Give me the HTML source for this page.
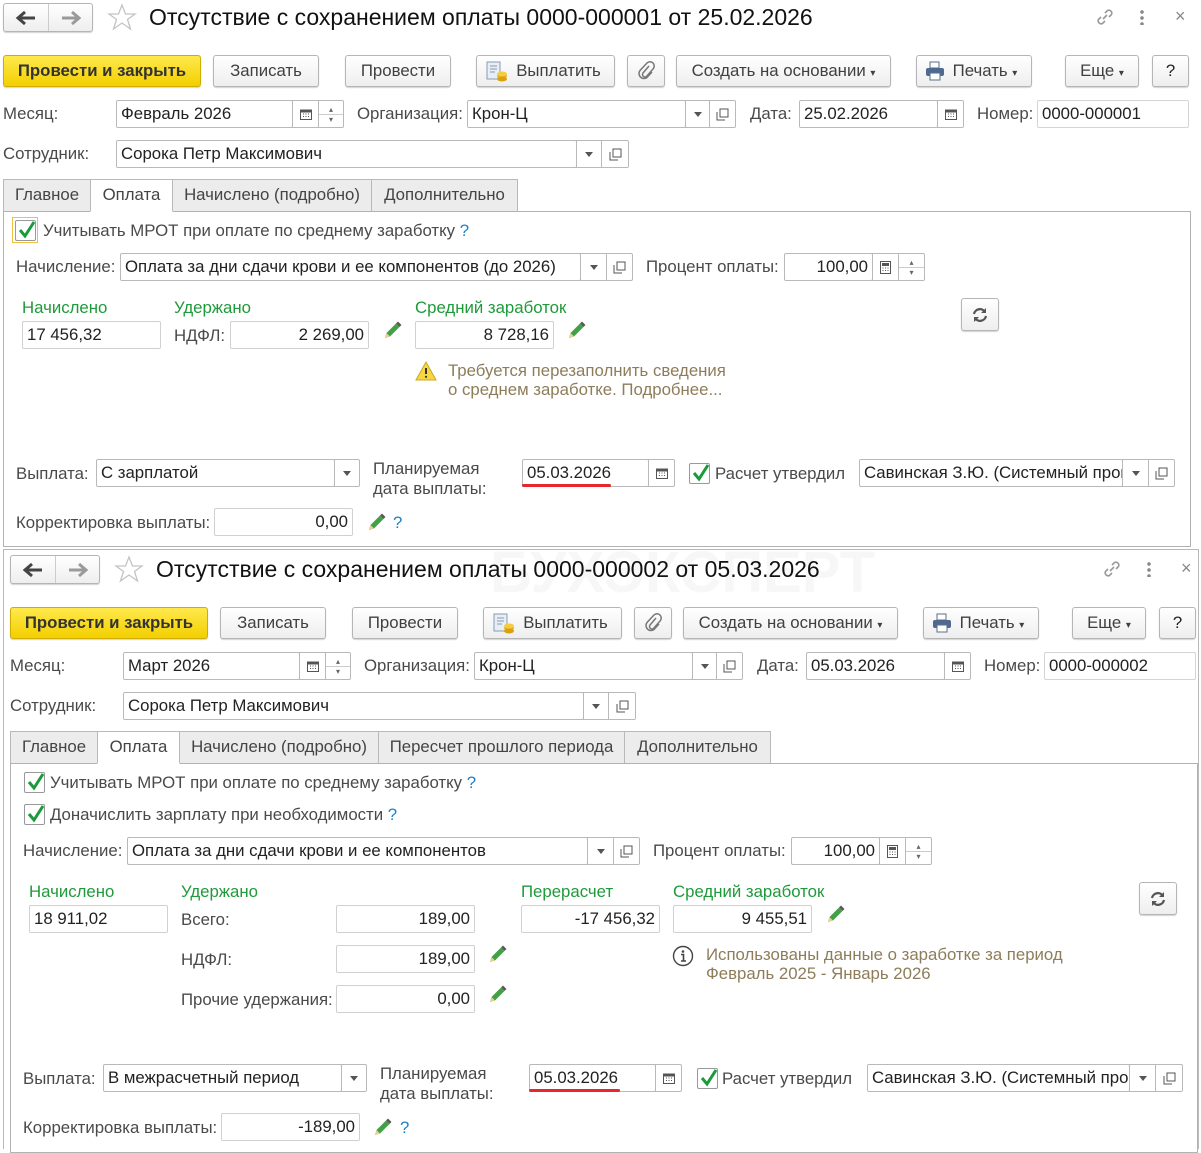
<!DOCTYPE html>
<html><head><meta charset="utf-8"><style>
*{box-sizing:border-box;margin:0;padding:0}
body{width:1201px;height:1147px;background:#fff;position:relative;overflow:hidden;font-family:"Liberation Sans",Arial,sans-serif;font-size:16.8px;color:#4a4a4a}
.a{position:absolute}
.l{position:absolute;white-space:nowrap;line-height:20px}
.g{color:#1f9a3a}
.q{color:#1a7fc8}
.in{position:absolute;height:28px;border:1px solid #b9b9b9;border-radius:2px;background:#fff;color:#222;line-height:26px;padding:0 4px;white-space:nowrap;overflow:hidden}
.r{text-align:right}
.sb{position:absolute;height:28px;border:1px solid #b9b9b9;border-radius:0 2px 2px 0;background:#fff;display:flex;align-items:center;justify-content:center}
.mid{border-radius:0}
.btn{position:absolute;height:32px;border:1px solid #b5b5b5;border-radius:3px;background:linear-gradient(#fff,#eeeeee);box-shadow:0 1px 1px rgba(0,0,0,.18);color:#404040;line-height:30px;text-align:center;white-space:nowrap}
.y{background:linear-gradient(#ffe94d,#f3cf00);border-color:#cfae00;font-weight:bold;color:#333}
.tab{position:absolute;height:33px;border:1px solid #b9b9b9;background:#ececec;color:#444;line-height:30px;text-align:center;white-space:nowrap}
.tab.act{background:#fff;border-bottom-color:#fff;z-index:2}
.panel{position:absolute;border:1px solid #b2b2b2;background:#fff}
.ttl{position:absolute;font-size:23px;color:#111;white-space:nowrap;line-height:28px}
.cb{position:absolute;width:21px;height:21px;border:1px solid #999;border-radius:2px;background:#fff}
.dd{width:0;height:0;border-left:4px solid transparent;border-right:4px solid transparent;border-top:5px solid #555}
.warn{color:#8d7d5a}
</style></head><body>

<div class="l" style="left:490px;top:543px;font-size:58px;line-height:60px;font-weight:bold;color:rgba(0,0,0,0.03)">БУХЭКСПЕРТ</div>

<!-- ================= FORM 1 ================= -->
<div class="btn" style="left:3px;top:3px;width:90px;height:29px"></div>
<div class="a" style="left:48px;top:4px;width:1px;height:27px;background:#ccc"></div>
<svg class="a" style="left:15px;top:9px" width="22" height="18"><path d="M20 9H5M10 3L3 9L10 15" stroke="#444" stroke-width="3" fill="none"/></svg>
<svg class="a" style="left:60px;top:9px" width="22" height="18"><path d="M2 9H17M12 3L19 9L12 15" stroke="#9a9a9a" stroke-width="3" fill="none"/></svg>
<svg class="a" style="left:107px;top:3px" width="30" height="28"><path d="M15 2L18.5 11H28L20.5 16.5L23.5 26L15 20L6.5 26L9.5 16.5L2 11H11.5Z" fill="none" stroke="#c4c4c4" stroke-width="1.3"/></svg>
<div class="ttl" style="left:149px;top:3px">Отсутствие с сохранением оплаты 0000-000001 от 25.02.2026</div>
<svg class="a" style="left:1094px;top:6px" width="22" height="22"><path d="M9 13L13 9M7 11L4.5 13.5a3 3 0 0 0 4 4L11 15M15 11L17.5 8.5a3 3 0 0 0-4-4L11 7" stroke="#999" stroke-width="1.6" fill="none"/></svg>
<div class="a" style="left:1140px;top:9px;width:4px;height:16px;background:radial-gradient(circle,#888 1.6px,transparent 2px) 0 0/4px 6px"></div>
<div class="l" style="left:1175px;top:6px;color:#888;font-size:18px">×</div>

<div class="btn y" style="left:3px;top:55px;width:198px">Провести и закрыть</div>
<div class="btn" style="left:213px;top:55px;width:106px">Записать</div>
<div class="btn" style="left:345px;top:55px;width:106px">Провести</div>
<div class="btn" style="left:476px;top:55px;width:139px;padding-left:26px">Выплатить</div>
<svg class="a" style="left:486px;top:61px" width="22" height="22"><rect x="1" y="1" width="13" height="17" fill="#e8eef5" stroke="#8a9bb0"/><path d="M4 5h7M4 8h7M4 11h5" stroke="#8a9bb0"/><ellipse cx="16" cy="15" rx="5" ry="2.5" fill="#e2b020"/><ellipse cx="16" cy="18" rx="5" ry="2.5" fill="#d9a010"/><ellipse cx="16" cy="13" rx="5" ry="2.5" fill="#f3cc40"/></svg>
<div class="btn" style="left:627px;top:55px;width:38px"></div>
<svg class="a" style="left:637px;top:61px" width="20" height="20"><path d="M12 5L6 12a2.5 2.5 0 0 0 3.5 3.5L16 8a4 4 0 0 0-6-6L3 9.5a5 5 0 0 0 7 7L15 11" stroke="#777" stroke-width="1.5" fill="none"/></svg>
<div class="btn" style="left:676px;top:55px;width:215px">Создать на основании <span style="font-size:10px">▾</span></div>
<div class="btn" style="left:916px;top:55px;width:116px;padding-left:22px">Печать <span style="font-size:10px">▾</span></div>
<svg class="a" style="left:925px;top:61px" width="20" height="20"><rect x="5" y="1" width="9" height="6" fill="#fff" stroke="#5a6f8c"/><rect x="1" y="7" width="18" height="8" rx="2" fill="#4e6a90"/><rect x="5" y="12" width="10" height="7" fill="#fff" stroke="#5a6f8c"/></svg>
<div class="btn" style="left:1065px;top:55px;width:74px">Еще <span style="font-size:10px">▾</span></div>
<div class="btn" style="left:1152px;top:55px;width:37px;color:#222">?</div>

<div class="l" style="left:3px;top:104px">Месяц:</div>
<div class="in" style="left:116px;top:100px;width:177px">Февраль 2026</div>
<div class="sb mid" style="left:292px;top:100px;width:27px"><svg width="12" height="12"><rect x="0.5" y="2" width="11" height="9.5" fill="none" stroke="#555"/><path d="M0.5 2h11v2.5h-11z" fill="#555"/><path d="M3 6h1M5.5 6h1M8 6h1M3 8.5h1M5.5 8.5h1M8 8.5h1" stroke="#555"/></svg></div>
<div class="sb" style="left:318px;top:100px;width:26px;flex-direction:column"><div style="font-size:8px;line-height:9px;color:#666">▴</div><div style="width:24px;height:1px;background:#ccc"></div><div style="font-size:8px;line-height:9px;color:#666">▾</div></div>
<div class="l" style="left:357px;top:104px">Организация:</div>
<div class="in" style="left:467px;top:100px;width:219px">Крон-Ц</div>
<div class="sb mid" style="left:685px;top:100px;width:25px"><div class="dd"></div></div>
<div class="sb" style="left:709px;top:100px;width:27px"><svg width="13" height="13"><rect x="4" y="1" width="8" height="8" fill="none" stroke="#555"/><path d="M1 4v8h8" fill="none" stroke="#555"/></svg></div>
<div class="l" style="left:750px;top:104px">Дата:</div>
<div class="in" style="left:799px;top:100px;width:139px">25.02.2026</div>
<div class="sb" style="left:937px;top:100px;width:27px"><svg width="12" height="12"><rect x="0.5" y="2" width="11" height="9.5" fill="none" stroke="#555"/><path d="M0.5 2h11v2.5h-11z" fill="#555"/><path d="M3 6h1M5.5 6h1M8 6h1M3 8.5h1M5.5 8.5h1M8 8.5h1" stroke="#555"/></svg></div>
<div class="l" style="left:977px;top:104px">Номер:</div>
<div class="in" style="left:1037px;top:100px;width:152px;border-color:#d4d4d4">0000-000001</div>

<div class="l" style="left:3px;top:144px">Сотрудник:</div>
<div class="in" style="left:116px;top:140px;width:461px">Сорока Петр Максимович</div>
<div class="sb mid" style="left:576px;top:140px;width:26px"><div class="dd"></div></div>
<div class="sb" style="left:601px;top:140px;width:28px"><svg width="13" height="13"><rect x="4" y="1" width="8" height="8" fill="none" stroke="#555"/><path d="M1 4v8h8" fill="none" stroke="#555"/></svg></div>

<div class="tab" style="left:3px;top:179px;width:88px">Главное</div>
<div class="tab act" style="left:90px;top:179px;width:83px">Оплата</div>
<div class="tab" style="left:172px;top:179px;width:200px">Начислено (подробно)</div>
<div class="tab" style="left:371px;top:179px;width:147px">Дополнительно</div>
<div class="panel" style="left:3px;top:211px;width:1188px;height:336px"></div>

<div class="a" style="left:12px;top:217px;width:26px;height:26px;border:1px solid #f0c040"></div>
<div class="cb" style="left:15px;top:220px"></div>
<svg class="a" style="left:16px;top:219px" width="22" height="22"><path d="M4 11L9 17L18 3" stroke="#1a9a3a" stroke-width="3" fill="none"/></svg>
<div class="l" style="left:43px;top:221px">Учитывать МРОТ при оплате по среднему заработку <span class="q">?</span></div>

<div class="l" style="left:16px;top:257px">Начисление:</div>
<div class="in" style="left:120px;top:253px;width:461px">Оплата за дни сдачи крови и ее компонентов (до 2026)</div>
<div class="sb mid" style="left:580px;top:253px;width:27px"><div class="dd"></div></div>
<div class="sb" style="left:606px;top:253px;width:27px"><svg width="13" height="13"><rect x="4" y="1" width="8" height="8" fill="none" stroke="#555"/><path d="M1 4v8h8" fill="none" stroke="#555"/></svg></div>
<div class="l" style="left:646px;top:257px">Процент оплаты:</div>
<div class="in r" style="left:784px;top:253px;width:89px">100,00</div>
<div class="sb mid" style="left:872px;top:253px;width:27px"><svg width="11" height="13"><rect x="0.5" y="0.5" width="10" height="12" fill="none" stroke="#555"/><rect x="2" y="2" width="7" height="3" fill="#555"/><path d="M2.5 7h1M5 7h1M7.5 7h1M2.5 9.5h1M5 9.5h1M7.5 9.5h1" stroke="#555"/></svg></div>
<div class="sb" style="left:898px;top:253px;width:27px;flex-direction:column"><div style="font-size:8px;line-height:9px;color:#666">▴</div><div style="width:25px;height:1px;background:#ccc"></div><div style="font-size:8px;line-height:9px;color:#666">▾</div></div>

<div class="l g" style="left:22px;top:298px">Начислено</div>
<div class="l g" style="left:174px;top:298px">Удержано</div>
<div class="l g" style="left:415px;top:298px">Средний заработок</div>
<div class="in" style="left:22px;top:321px;width:139px;border-color:#d0d0d0">17 456,32</div>
<div class="l" style="left:174px;top:326px">НДФЛ:</div>
<div class="in r" style="left:230px;top:321px;width:139px;border-color:#d0d0d0">2 269,00</div>
<svg class="a" style="left:383px;top:320px" width="20" height="20"><path d="M2 18L3.5 13L13 3.5L16.5 7L7 16.5Z" fill="#43a047"/><path d="M13 3.5L15 1.5L18.5 5L16.5 7Z" fill="#5a5a5a"/><path d="M2 18L3.5 13L7 16.5Z" fill="#e8d090"/></svg>
<div class="in r" style="left:415px;top:321px;width:139px;border-color:#d0d0d0">8 728,16</div>
<svg class="a" style="left:567px;top:320px" width="20" height="20"><path d="M2 18L3.5 13L13 3.5L16.5 7L7 16.5Z" fill="#43a047"/><path d="M13 3.5L15 1.5L18.5 5L16.5 7Z" fill="#5a5a5a"/><path d="M2 18L3.5 13L7 16.5Z" fill="#e8d090"/></svg>
<div class="btn" style="left:961px;top:298px;width:38px;height:33px"></div>
<svg class="a" style="left:971px;top:306px" width="18" height="18"><path d="M3 8a6 6 0 0 1 11-2M15 10a6 6 0 0 1-11 2" stroke="#555" stroke-width="2.2" fill="none"/><path d="M15 2v5h-5z M3 16v-5h5z" fill="#555"/></svg>
<svg class="a" style="left:415px;top:361px" width="22" height="20"><path d="M11 1L21 19H1Z" fill="#f6d743" stroke="#c9a820"/><path d="M11 7v6" stroke="#333" stroke-width="2"/><circle cx="11" cy="15.8" r="1.1" fill="#333"/></svg>
<div class="l warn" style="left:448px;top:361px">Требуется перезаполнить сведения</div>
<div class="l warn" style="left:448px;top:380px">о среднем заработке. Подробнее...</div>

<div class="l" style="left:16px;top:464px">Выплата:</div>
<div class="in" style="left:96px;top:459px;width:239px">С зарплатой</div>
<div class="sb" style="left:334px;top:459px;width:26px"><div class="dd"></div></div>
<div class="l" style="left:373px;top:459px">Планируемая</div>
<div class="l" style="left:373px;top:479px">дата выплаты:</div>
<div class="in" style="left:522px;top:459px;width:127px">05.03.2026</div>
<div class="a" style="left:522px;top:484px;width:89px;height:3px;background:#e8262b;border-radius:2px"></div>
<div class="sb" style="left:648px;top:459px;width:27px"><svg width="12" height="12"><rect x="0.5" y="2" width="11" height="9.5" fill="none" stroke="#555"/><path d="M0.5 2h11v2.5h-11z" fill="#555"/><path d="M3 6h1M5.5 6h1M8 6h1M3 8.5h1M5.5 8.5h1M8 8.5h1" stroke="#555"/></svg></div>
<div class="cb" style="left:689px;top:463px"></div>
<svg class="a" style="left:690px;top:462px" width="22" height="22"><path d="M4 11L9 17L18 3" stroke="#1a9a3a" stroke-width="3" fill="none"/></svg>
<div class="l" style="left:715px;top:464px">Расчет утвердил</div>
<div class="in" style="left:859px;top:459px;width:264px">Савинская З.Ю. (Системный программист)</div>
<div class="sb mid" style="left:1122px;top:459px;width:27px"><div class="dd"></div></div>
<div class="sb" style="left:1148px;top:459px;width:27px"><svg width="13" height="13"><rect x="4" y="1" width="8" height="8" fill="none" stroke="#555"/><path d="M1 4v8h8" fill="none" stroke="#555"/></svg></div>

<div class="l" style="left:16px;top:513px">Корректировка выплаты:</div>
<div class="in r" style="left:214px;top:508px;width:139px;border-color:#d0d0d0">0,00</div>
<svg class="a" style="left:367px;top:512px" width="20" height="20"><path d="M2 18L3.5 13L13 3.5L16.5 7L7 16.5Z" fill="#43a047"/><path d="M13 3.5L15 1.5L18.5 5L16.5 7Z" fill="#5a5a5a"/><path d="M2 18L3.5 13L7 16.5Z" fill="#e8d090"/></svg>
<div class="l q" style="left:393px;top:513px">?</div>

<!-- ================= FORM 2 ================= -->
<div class="a" style="left:3px;top:549px;width:1196px;height:600px;border:1px solid #b9b9b9;border-bottom:none"></div>
<div class="btn" style="left:10px;top:555px;width:90px;height:29px"></div>
<div class="a" style="left:55px;top:556px;width:1px;height:27px;background:#ccc"></div>
<svg class="a" style="left:22px;top:561px" width="22" height="18"><path d="M20 9H5M10 3L3 9L10 15" stroke="#444" stroke-width="3" fill="none"/></svg>
<svg class="a" style="left:67px;top:561px" width="22" height="18"><path d="M2 9H17M12 3L19 9L12 15" stroke="#9a9a9a" stroke-width="3" fill="none"/></svg>
<svg class="a" style="left:114px;top:555px" width="30" height="28"><path d="M15 2L18.5 11H28L20.5 16.5L23.5 26L15 20L6.5 26L9.5 16.5L2 11H11.5Z" fill="none" stroke="#c4c4c4" stroke-width="1.3"/></svg>
<div class="ttl" style="left:156px;top:555px">Отсутствие с сохранением оплаты 0000-000002 от 05.03.2026</div>
<svg class="a" style="left:1101px;top:558px" width="22" height="22"><path d="M9 13L13 9M7 11L4.5 13.5a3 3 0 0 0 4 4L11 15M15 11L17.5 8.5a3 3 0 0 0-4-4L11 7" stroke="#999" stroke-width="1.6" fill="none"/></svg>
<div class="a" style="left:1147px;top:561px;width:4px;height:16px;background:radial-gradient(circle,#888 1.6px,transparent 2px) 0 0/4px 6px"></div>
<div class="l" style="left:1181px;top:558px;color:#888;font-size:18px">×</div>

<div class="btn y" style="left:10px;top:607px;width:198px">Провести и закрыть</div>
<div class="btn" style="left:220px;top:607px;width:106px">Записать</div>
<div class="btn" style="left:352px;top:607px;width:106px">Провести</div>
<div class="btn" style="left:483px;top:607px;width:139px;padding-left:26px">Выплатить</div>
<svg class="a" style="left:493px;top:613px" width="22" height="22"><rect x="1" y="1" width="13" height="17" fill="#e8eef5" stroke="#8a9bb0"/><path d="M4 5h7M4 8h7M4 11h5" stroke="#8a9bb0"/><ellipse cx="16" cy="15" rx="5" ry="2.5" fill="#e2b020"/><ellipse cx="16" cy="18" rx="5" ry="2.5" fill="#d9a010"/><ellipse cx="16" cy="13" rx="5" ry="2.5" fill="#f3cc40"/></svg>
<div class="btn" style="left:634px;top:607px;width:38px"></div>
<svg class="a" style="left:644px;top:613px" width="20" height="20"><path d="M12 5L6 12a2.5 2.5 0 0 0 3.5 3.5L16 8a4 4 0 0 0-6-6L3 9.5a5 5 0 0 0 7 7L15 11" stroke="#777" stroke-width="1.5" fill="none"/></svg>
<div class="btn" style="left:683px;top:607px;width:215px">Создать на основании <span style="font-size:10px">▾</span></div>
<div class="btn" style="left:923px;top:607px;width:116px;padding-left:22px">Печать <span style="font-size:10px">▾</span></div>
<svg class="a" style="left:932px;top:613px" width="20" height="20"><rect x="5" y="1" width="9" height="6" fill="#fff" stroke="#5a6f8c"/><rect x="1" y="7" width="18" height="8" rx="2" fill="#4e6a90"/><rect x="5" y="12" width="10" height="7" fill="#fff" stroke="#5a6f8c"/></svg>
<div class="btn" style="left:1072px;top:607px;width:74px">Еще <span style="font-size:10px">▾</span></div>
<div class="btn" style="left:1159px;top:607px;width:37px;color:#222">?</div>

<div class="l" style="left:10px;top:656px">Месяц:</div>
<div class="in" style="left:123px;top:652px;width:177px">Март 2026</div>
<div class="sb mid" style="left:299px;top:652px;width:27px"><svg width="12" height="12"><rect x="0.5" y="2" width="11" height="9.5" fill="none" stroke="#555"/><path d="M0.5 2h11v2.5h-11z" fill="#555"/><path d="M3 6h1M5.5 6h1M8 6h1M3 8.5h1M5.5 8.5h1M8 8.5h1" stroke="#555"/></svg></div>
<div class="sb" style="left:325px;top:652px;width:26px;flex-direction:column"><div style="font-size:8px;line-height:9px;color:#666">▴</div><div style="width:24px;height:1px;background:#ccc"></div><div style="font-size:8px;line-height:9px;color:#666">▾</div></div>
<div class="l" style="left:364px;top:656px">Организация:</div>
<div class="in" style="left:474px;top:652px;width:219px">Крон-Ц</div>
<div class="sb mid" style="left:692px;top:652px;width:25px"><div class="dd"></div></div>
<div class="sb" style="left:716px;top:652px;width:27px"><svg width="13" height="13"><rect x="4" y="1" width="8" height="8" fill="none" stroke="#555"/><path d="M1 4v8h8" fill="none" stroke="#555"/></svg></div>
<div class="l" style="left:757px;top:656px">Дата:</div>
<div class="in" style="left:806px;top:652px;width:139px">05.03.2026</div>
<div class="sb" style="left:944px;top:652px;width:27px"><svg width="12" height="12"><rect x="0.5" y="2" width="11" height="9.5" fill="none" stroke="#555"/><path d="M0.5 2h11v2.5h-11z" fill="#555"/><path d="M3 6h1M5.5 6h1M8 6h1M3 8.5h1M5.5 8.5h1M8 8.5h1" stroke="#555"/></svg></div>
<div class="l" style="left:984px;top:656px">Номер:</div>
<div class="in" style="left:1044px;top:652px;width:152px;border-color:#d4d4d4">0000-000002</div>

<div class="l" style="left:10px;top:696px">Сотрудник:</div>
<div class="in" style="left:123px;top:692px;width:461px">Сорока Петр Максимович</div>
<div class="sb mid" style="left:583px;top:692px;width:26px"><div class="dd"></div></div>
<div class="sb" style="left:608px;top:692px;width:28px"><svg width="13" height="13"><rect x="4" y="1" width="8" height="8" fill="none" stroke="#555"/><path d="M1 4v8h8" fill="none" stroke="#555"/></svg></div>

<div class="tab" style="left:10px;top:731px;width:88px">Главное</div>
<div class="tab act" style="left:97px;top:731px;width:83px">Оплата</div>
<div class="tab" style="left:179px;top:731px;width:200px">Начислено (подробно)</div>
<div class="tab" style="left:378px;top:731px;width:247px">Пересчет прошлого периода</div>
<div class="tab" style="left:624px;top:731px;width:147px">Дополнительно</div>
<div class="panel" style="left:10px;top:763px;width:1188px;height:390px"></div>

<div class="cb" style="left:24px;top:772px"></div>
<svg class="a" style="left:25px;top:771px" width="22" height="22"><path d="M4 11L9 17L18 3" stroke="#1a9a3a" stroke-width="3" fill="none"/></svg>
<div class="l" style="left:50px;top:773px">Учитывать МРОТ при оплате по среднему заработку <span class="q">?</span></div>
<div class="cb" style="left:24px;top:804px"></div>
<svg class="a" style="left:25px;top:803px" width="22" height="22"><path d="M4 11L9 17L18 3" stroke="#1a9a3a" stroke-width="3" fill="none"/></svg>
<div class="l" style="left:50px;top:805px">Доначислить зарплату при необходимости <span class="q">?</span></div>

<div class="l" style="left:23px;top:841px">Начисление:</div>
<div class="in" style="left:127px;top:837px;width:461px">Оплата за дни сдачи крови и ее компонентов</div>
<div class="sb mid" style="left:587px;top:837px;width:27px"><div class="dd"></div></div>
<div class="sb" style="left:613px;top:837px;width:27px"><svg width="13" height="13"><rect x="4" y="1" width="8" height="8" fill="none" stroke="#555"/><path d="M1 4v8h8" fill="none" stroke="#555"/></svg></div>
<div class="l" style="left:653px;top:841px">Процент оплаты:</div>
<div class="in r" style="left:791px;top:837px;width:89px">100,00</div>
<div class="sb mid" style="left:879px;top:837px;width:27px"><svg width="11" height="13"><rect x="0.5" y="0.5" width="10" height="12" fill="none" stroke="#555"/><rect x="2" y="2" width="7" height="3" fill="#555"/><path d="M2.5 7h1M5 7h1M7.5 7h1M2.5 9.5h1M5 9.5h1M7.5 9.5h1" stroke="#555"/></svg></div>
<div class="sb" style="left:905px;top:837px;width:27px;flex-direction:column"><div style="font-size:8px;line-height:9px;color:#666">▴</div><div style="width:25px;height:1px;background:#ccc"></div><div style="font-size:8px;line-height:9px;color:#666">▾</div></div>

<div class="l g" style="left:29px;top:882px">Начислено</div>
<div class="l g" style="left:181px;top:882px">Удержано</div>
<div class="l g" style="left:521px;top:882px">Перерасчет</div>
<div class="l g" style="left:673px;top:882px">Средний заработок</div>
<div class="in" style="left:29px;top:905px;width:139px;border-color:#d0d0d0">18 911,02</div>
<div class="l" style="left:181px;top:910px">Всего:</div>
<div class="in r" style="left:336px;top:905px;width:139px;border-color:#d0d0d0">189,00</div>
<div class="in r" style="left:521px;top:905px;width:139px;border-color:#d0d0d0">-17 456,32</div>
<div class="in r" style="left:673px;top:905px;width:139px;border-color:#d0d0d0">9 455,51</div>
<svg class="a" style="left:826px;top:904px" width="20" height="20"><path d="M2 18L3.5 13L13 3.5L16.5 7L7 16.5Z" fill="#43a047"/><path d="M13 3.5L15 1.5L18.5 5L16.5 7Z" fill="#5a5a5a"/><path d="M2 18L3.5 13L7 16.5Z" fill="#e8d090"/></svg>
<div class="l" style="left:181px;top:950px">НДФЛ:</div>
<div class="in r" style="left:336px;top:945px;width:139px;border-color:#d0d0d0">189,00</div>
<svg class="a" style="left:488px;top:944px" width="20" height="20"><path d="M2 18L3.5 13L13 3.5L16.5 7L7 16.5Z" fill="#43a047"/><path d="M13 3.5L15 1.5L18.5 5L16.5 7Z" fill="#5a5a5a"/><path d="M2 18L3.5 13L7 16.5Z" fill="#e8d090"/></svg>
<div class="l" style="left:181px;top:990px">Прочие удержания:</div>
<div class="in r" style="left:336px;top:985px;width:139px;border-color:#d0d0d0">0,00</div>
<svg class="a" style="left:488px;top:984px" width="20" height="20"><path d="M2 18L3.5 13L13 3.5L16.5 7L7 16.5Z" fill="#43a047"/><path d="M13 3.5L15 1.5L18.5 5L16.5 7Z" fill="#5a5a5a"/><path d="M2 18L3.5 13L7 16.5Z" fill="#e8d090"/></svg>
<svg class="a" style="left:672px;top:945px" width="22" height="22"><circle cx="11" cy="11" r="9.5" fill="none" stroke="#444" stroke-width="1.4"/><circle cx="11" cy="6.5" r="1.3" fill="#444"/><path d="M9 9.5h2.5v6M9 16h5" stroke="#444" stroke-width="1.6" fill="none"/></svg>
<div class="l warn" style="left:706px;top:945px">Использованы данные о заработке за период</div>
<div class="l warn" style="left:706px;top:964px">Февраль 2025 - Январь 2026</div>
<div class="btn" style="left:1139px;top:882px;width:38px;height:33px"></div>
<svg class="a" style="left:1149px;top:890px" width="18" height="18"><path d="M3 8a6 6 0 0 1 11-2M15 10a6 6 0 0 1-11 2" stroke="#555" stroke-width="2.2" fill="none"/><path d="M15 2v5h-5z M3 16v-5h5z" fill="#555"/></svg>

<div class="l" style="left:23px;top:1069px">Выплата:</div>
<div class="in" style="left:103px;top:1064px;width:239px">В межрасчетный период</div>
<div class="sb" style="left:341px;top:1064px;width:26px"><div class="dd"></div></div>
<div class="l" style="left:380px;top:1064px">Планируемая</div>
<div class="l" style="left:380px;top:1084px">дата выплаты:</div>
<div class="in" style="left:529px;top:1064px;width:127px">05.03.2026</div>
<div class="a" style="left:529px;top:1089px;width:91px;height:3px;background:#e8262b;border-radius:2px"></div>
<div class="sb" style="left:655px;top:1064px;width:27px"><svg width="12" height="12"><rect x="0.5" y="2" width="11" height="9.5" fill="none" stroke="#555"/><path d="M0.5 2h11v2.5h-11z" fill="#555"/><path d="M3 6h1M5.5 6h1M8 6h1M3 8.5h1M5.5 8.5h1M8 8.5h1" stroke="#555"/></svg></div>
<div class="cb" style="left:697px;top:1068px"></div>
<svg class="a" style="left:698px;top:1067px" width="22" height="22"><path d="M4 11L9 17L18 3" stroke="#1a9a3a" stroke-width="3" fill="none"/></svg>
<div class="l" style="left:722px;top:1069px">Расчет утвердил</div>
<div class="in" style="left:867px;top:1064px;width:263px">Савинская З.Ю. (Системный программист)</div>
<div class="sb mid" style="left:1129px;top:1064px;width:27px"><div class="dd"></div></div>
<div class="sb" style="left:1155px;top:1064px;width:28px"><svg width="13" height="13"><rect x="4" y="1" width="8" height="8" fill="none" stroke="#555"/><path d="M1 4v8h8" fill="none" stroke="#555"/></svg></div>

<div class="l" style="left:23px;top:1118px">Корректировка выплаты:</div>
<div class="in r" style="left:221px;top:1113px;width:139px;border-color:#d0d0d0">-189,00</div>
<svg class="a" style="left:373px;top:1117px" width="20" height="20"><path d="M2 18L3.5 13L13 3.5L16.5 7L7 16.5Z" fill="#43a047"/><path d="M13 3.5L15 1.5L18.5 5L16.5 7Z" fill="#5a5a5a"/><path d="M2 18L3.5 13L7 16.5Z" fill="#e8d090"/></svg>
<div class="l q" style="left:400px;top:1118px">?</div>

</body></html>
